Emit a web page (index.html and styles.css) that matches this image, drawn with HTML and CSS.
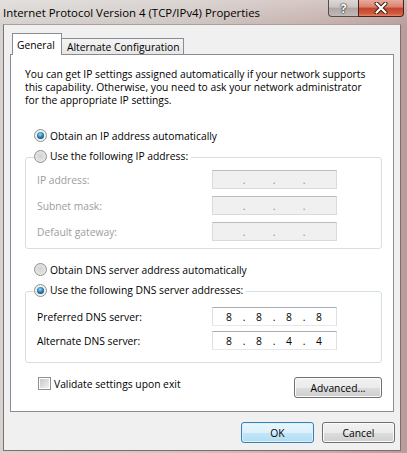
FILE: index.html
```html
<!DOCTYPE html>
<html>
<head>
  <title>Internet Protocol Version 4 (TCP/IPv4) Properties</title>
  <link rel="stylesheet" href="styles.css">
</head>
<body>

<div class="window">
  <div class="titlebar">
    <span class="title">Internet Protocol Version 4 (TCP/IPv4) Properties</span>
    <div class="caption-buttons">
      <span class="cap help">?</span>
      <span class="cap close">
        <svg width="16" height="12" viewBox="0 0 16 12">
          <path d="M3.5 1.5 L12.5 10.5 M12.5 1.5 L3.5 10.5" stroke="#3a1c17" stroke-width="4" stroke-linecap="round"/>
          <path d="M3.5 1.5 L12.5 10.5 M12.5 1.5 L3.5 10.5" stroke="#fff" stroke-width="2.2" stroke-linecap="round"/>
        </svg>
      </span>
    </div>
  </div>

  <div class="client">
    <div class="tabs">
      <div class="tab active">General</div>
      <div class="tab">Alternate Configuration</div>
    </div>

    <div class="panel">
      <p class="intro">You can get IP settings assigned automatically if your network supports<br>this capability. Otherwise, you need to ask your network administrator<br>for the appropriate IP settings.</p>

      <label class="option"><span class="radio on"></span>Obtain an IP address automatically</label>

      <div class="group">
        <label class="legend"><span class="radio"></span>Use the following IP address:</label>
        <div class="rows">
          <div class="field disabled">
            <span class="label">IP address:</span>
            <span class="ip"><span class="octet"></span><span class="dot">.</span><span class="octet"></span><span class="dot">.</span><span class="octet"></span><span class="dot">.</span><span class="octet"></span></span>
          </div>
          <div class="field disabled">
            <span class="label">Subnet mask:</span>
            <span class="ip"><span class="octet"></span><span class="dot">.</span><span class="octet"></span><span class="dot">.</span><span class="octet"></span><span class="dot">.</span><span class="octet"></span></span>
          </div>
          <div class="field disabled">
            <span class="label">Default gateway:</span>
            <span class="ip"><span class="octet"></span><span class="dot">.</span><span class="octet"></span><span class="dot">.</span><span class="octet"></span><span class="dot">.</span><span class="octet"></span></span>
          </div>
        </div>
      </div>

      <label class="option dns-auto"><span class="radio"></span>Obtain DNS server address automatically</label>

      <div class="group dns">
        <label class="legend"><span class="radio on"></span>Use the following DNS server addresses:</label>
        <div class="rows">
          <div class="field">
            <span class="label">Preferred DNS server:</span>
            <span class="ip"><span class="octet">8</span><span class="dot">.</span><span class="octet">8</span><span class="dot">.</span><span class="octet">8</span><span class="dot">.</span><span class="octet">8</span></span>
          </div>
          <div class="field">
            <span class="label">Alternate DNS server:</span>
            <span class="ip"><span class="octet">8</span><span class="dot">.</span><span class="octet">8</span><span class="dot">.</span><span class="octet">4</span><span class="dot">.</span><span class="octet">4</span></span>
          </div>
        </div>
      </div>

      <div class="panel-foot">
        <label class="check"><span class="box"></span>Validate settings upon exit</label>
        <button class="btn advanced">Advanced...</button>
      </div>
    </div>

    <div class="dialog-buttons">
      <button class="btn default">OK</button>
      <button class="btn">Cancel</button>
    </div>
  </div>
</div>

</body>
</html>
```

FILE: styles.css
```css
body {
  margin: 0;
  font-family: "Open Sans", sans-serif;
  font-size: 10.3px;
  color: #000;
}

.window {
  width: 407px;
  height: 453px;
  box-sizing: border-box;
  padding: 0 6px 2px 3px;
  display: flex;
  flex-direction: column;
  background:
    linear-gradient(180deg, rgba(255,255,255,0.3), rgba(255,255,255,0) 26px),
    linear-gradient(90deg, #d6d2cf, #cdc5c1 45%, #c4afab 80%, #b89e9a);
}

.titlebar {
  height: 24px;
  display: flex;
  flex: none;
}

.title {
  flex: 1;
  font-size: 11.4px;
  line-height: 25px;
}

.caption-buttons {
  display: flex;
  height: 17px;
  margin-right: -3px;
}

.cap {
  box-sizing: border-box;
  height: 17px;
  display: flex;
  align-items: center;
  justify-content: center;
  border: 1px solid #5a4a47;
  border-top: none;
}

.help {
  width: 30px;
  border-radius: 0 0 0 4px;
  border-right: none;
  background: linear-gradient(#ddd8d6, #cbc4c2 45%, #aea6a4 50%, #c1bab8);
  color: #fff;
  font-weight: bold;
  font-size: 12px;
  text-shadow: 0 0 1px #222, 0 0 1px #222, 0 0 2px #444;
}

.close {
  width: 46px;
  border-radius: 0 0 4px 0;
  border-color: #4a221d;
  background: linear-gradient(#e8aa9c, #d9806f 45%, #c4432c 50%, #d25a3c 85%, #e0876a);
}

.close svg {
  display: block;
}

.client {
  flex: 1;
  display: flex;
  flex-direction: column;
  background: #f0f0f0;
  border: 1px solid #7e6f6d;
  border-top-color: #aca19e;
}

.tabs {
  display: flex;
  align-items: flex-end;
  height: 21px;
  margin: 8px 0 0 8px;
}

.tab {
  box-sizing: border-box;
  display: flex;
  align-items: center;
  border: 1px solid #898c95;
  border-bottom: none;
}

.tab.active {
  width: 50px;
  height: 22px;
  padding-left: 4px;
  margin-bottom: -1px;
  background: #fff;
  position: relative;
  z-index: 1;
}

.tab + .tab {
  width: 123px;
  height: 16px;
  padding-left: 5px;
  margin-left: -1px;
  background: linear-gradient(#f3f3f3, #e6e6e6);
}

.panel {
  box-sizing: border-box;
  width: 384px;
  margin-left: 6px;
  padding: 13px 11px 13px 14px;
  display: flex;
  flex-direction: column;
  background: #fff;
  border: 1px solid #898c95;
}

.intro {
  margin: 0;
  line-height: 13px;
}

.option, .legend, .check {
  display: flex;
  align-items: center;
  gap: 3px;
}

.option {
  height: 13px;
  padding-left: 9px;
  margin-top: 22px;
}

.option.dns-auto {
  margin-top: 14px;
}

.radio {
  box-sizing: border-box;
  width: 13px;
  height: 13px;
  flex: none;
  border-radius: 50%;
  border: 1px solid #8e8f8f;
  background: radial-gradient(circle at 50% 45%, #d2d2d2, #e2e2e2 55%, #f6f6f6);
  display: flex;
  align-items: center;
  justify-content: center;
}

.radio.on {
  background: radial-gradient(circle at 50% 45%, #e4e4e4, #f3f3f3 70%, #fff);
}

.radio.on::after {
  content: "";
  width: 7px;
  height: 7px;
  border-radius: 50%;
  background: radial-gradient(circle at 45% 35%, #9fdcf7, #2b83b3 45%, #0d4668 85%);
}

.group {
  margin-top: 15px;
  padding-bottom: 7px;
  border: 1px solid #d5dfe5;
  border-radius: 3px;
  display: flex;
  flex-direction: column;
}

.legend {
  height: 14px;
  width: fit-content;
  margin: -9px 0 0 8px;
  padding-right: 3px;
  background: #fff;
}

.rows {
  display: flex;
  flex-direction: column;
  gap: 7px;
  margin-top: 7px;
}

.group.dns {
  padding-bottom: 12px;
}

.dns .rows {
  gap: 5px;
  margin-top: 10px;
}

.field {
  display: flex;
  align-items: center;
  height: 19px;
  padding-left: 11px;
}

.label {
  width: 175px;
}

.ip {
  box-sizing: border-box;
  width: 125px;
  height: 19px;
  padding-left: 3px;
  display: flex;
  align-items: center;
  background: #fff;
  border: 1px solid #dbdfe6;
  border-top-color: #abadb3;
  border-bottom-color: #e3e9ef;
}

.octet {
  width: 26px;
  text-align: center;
}

.dot {
  width: 4px;
  text-align: center;
}

.disabled .label {
  color: #9d9d9d;
}

.disabled .ip {
  background: #f0f0f0;
  border-color: #dadada;
  border-top-color: #bcbcbc;
  color: #8a8a8a;
}

.panel-foot {
  margin-top: 14px;
  padding-left: 13px;
  display: flex;
  justify-content: space-between;
  align-items: flex-start;
}

.check {
  height: 13px;
}

.box {
  box-sizing: border-box;
  width: 13px;
  height: 13px;
  padding: 1px;
  flex: none;
  border: 1px solid #8e8f8f;
  background:
    linear-gradient(135deg, #c8c8c8, #f2f2f2) content-box,
    linear-gradient(#fff, #fff) padding-box;
}

.btn {
  box-sizing: border-box;
  height: 21px;
  padding: 0;
  font: inherit;
  color: #000;
  border: 1px solid #707070;
  border-radius: 3px;
  background: linear-gradient(#f2f2f2, #ebebeb 50%, #dddddd 50%, #cfcfcf);
  box-shadow: inset 0 0 0 1px #fbfbfb;
}

.btn.advanced {
  width: 88px;
}

.dialog-buttons {
  display: flex;
  justify-content: flex-end;
  gap: 8px;
  margin: 10px 5px 0 0;
}

.dialog-buttons .btn {
  width: 73px;
}

.btn.default {
  border-color: #3c7fb1;
  background: linear-gradient(#eaf6fd, #dcf1fc 50%, #c4e6f8 50%, #b2dcf2);
  box-shadow: inset 0 0 0 1px #d8f1fd;
}
```
